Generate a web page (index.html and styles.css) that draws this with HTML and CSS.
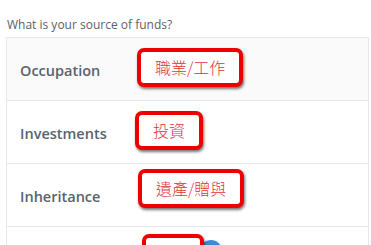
FILE: index.html
```html
<!DOCTYPE html>
<html>
<head>
<meta charset="utf-8">
<link rel="stylesheet" href="styles.css">
</head>
<body>
<div class="page">
  <div class="question">What is your source of funds?</div>
  <div class="table">
    <div class="row row-shaded">
      <div class="label">Occupation</div>
      <div class="tag tag-1">職業/工作</div>
    </div>
    <div class="row">
      <div class="label">Investments</div>
      <div class="tag tag-2">投資</div>
    </div>
    <div class="row">
      <div class="label">Inheritance</div>
      <div class="tag tag-3">遺產/贈與</div>
    </div>
    <div class="row">
      <div class="label"></div>
      <div class="tag tag-4">&nbsp;&nbsp;&nbsp;&nbsp;</div>
      <div class="dot"></div>
    </div>
  </div>
</div>
</body>
</html>
```
FILE: styles.css
```css
html, body {
  margin: 0;
  padding: 0;
  background: #ffffff;
  overflow: hidden;
}
.page {
  width: 371px;
  height: 245px;
  overflow: hidden;
}
.question {
  font-family: "Open Sans", "Liberation Sans", sans-serif;
  font-size: 12px;
  line-height: 14px;
  color: #5c6166;
  padding: 18px 0 0 7px;
  height: 19px;
}
.table {
  margin-left: 6px;
  width: 361px;
  border: 1px solid #e6e8ea;
  border-bottom: none;
}
.row {
  display: flex;
  align-items: flex-start;
  height: 62px;
  padding-left: 13px;
  border-top: 1px solid #e6e8ea;
  position: relative;
}
.row:first-child {
  border-top: none;
}
.row-shaded {
  background: #fafafb;
}
.label {
  width: 117px;
  height: 62px;
  display: flex;
  align-items: center;
  padding-top: 3px;
  box-sizing: border-box;
  font-family: "Open Sans", "Liberation Sans", sans-serif;
  font-size: 14.5px;
  font-weight: 600;
  color: #5a626c;
}
.tag {
  position: relative;
  z-index: 1;
  box-sizing: border-box;
  height: 39px;
  padding: 0 14px;
  border: 4px solid #ee0000;
  border-radius: 7px;
  background: #ffffff;
  box-shadow: 1px 2px 3px rgba(0, 0, 0, 0.55);
  font-family: "Noto Sans CJK TC", "Noto Sans CJK SC", sans-serif;
  font-size: 16px;
  font-weight: 300;
  line-height: 31px;
  color: #e3323a;
  white-space: nowrap;
}
.tag-1 { margin-top: 10px; }
.tag-2 { margin-top: 10px; margin-left: -2px; }
.tag-3 { margin-top: 5px; margin-left: 1px; }
.tag-4 { margin-top: 7px; margin-left: 5px; width: 62px; }
.dot {
  width: 22px;
  height: 22px;
  border-radius: 50%;
  background: #3d8bd6;
  margin-top: 13px;
  margin-left: -4px;
}
```
